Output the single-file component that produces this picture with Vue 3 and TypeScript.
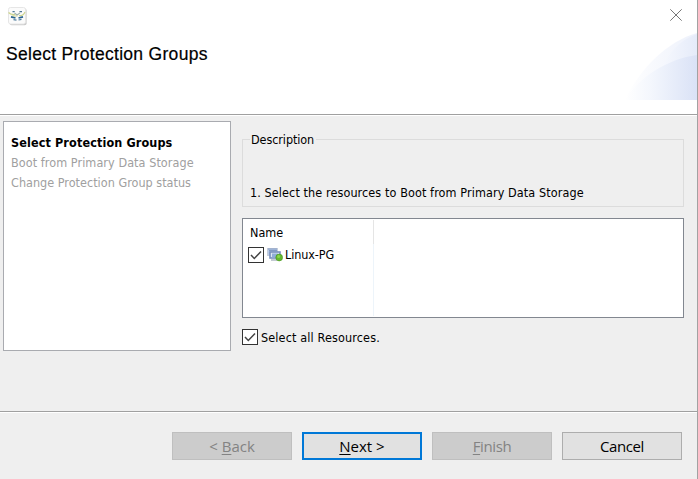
<script setup lang="ts">
import { ref } from 'vue'

interface Step { label: string; current: boolean }
interface WizardButton { before: string; key: string; after: string; kind: string; disabled: boolean }

const steps: Step[] = [
  { label: 'Select Protection Groups', current: true },
  { label: 'Boot from Primary Data Storage', current: false },
  { label: 'Change Protection Group status', current: false },
]
const buttons: WizardButton[] = [
  { before: '< ', key: 'B', after: 'ack', kind: 'back', disabled: true },
  { before: '', key: 'N', after: 'ext >', kind: 'next', disabled: false },
  { before: '', key: 'F', after: 'inish', kind: 'finish', disabled: true },
  { before: 'Cancel', key: '', after: '', kind: 'cancel', disabled: false },
]
const checked = ref(true)
const toggle = () => { checked.value = !checked.value }
</script>

<template>
  <main class="dialog">
    <header class="header">
      <svg class="logo" width="20" height="20" viewBox="0 0 20 20">
        <rect x="1.6" y="1.6" width="17" height="16.6" rx="2" fill="#c9c9c9" />
        <rect x="0.5" y="0.5" width="17" height="16.5" rx="2" fill="#fbfbfb" stroke="#e6e6e6" />
        <g fill="none" stroke-width="1.2">
          <path d="M.5 5.500Q3 8 7 7.500M11 8.500q4 1 6-3.500M3.500 9h6" stroke="#cdd48e" />
          <path d="M4.500 4.700h2.200M11.500 4.700h2.500" stroke="#4f7795" />
          <path d="M6.500 6l2.500 2 3-2" stroke="#9eb1ad" />
          <path d="M3 9.800l4.500 1.200M10.500 11l4.500-1.200" stroke="#2c6592" stroke-width="1.800" />
          <path d="M5.500 12.700l3 .5M10.500 13l3-.6" stroke="#5580a0" />
        </g>
      </svg>
      <h1 class="title">Select Protection Groups</h1>
      <svg class="close" width="12" height="12" viewBox="0 0 12 12">
        <path d="M.3.3 11.7 11.700M11.700.3.3 11.700" stroke="#777" fill="none" />
      </svg>
      <svg class="swoosh" width="72" height="67" viewBox="0 0 72 67">
        <defs>
          <linearGradient id="outer"><stop offset="0" stop-color="#fff" /><stop offset="1" stop-color="#edf1fb" /></linearGradient>
          <linearGradient id="inner"><stop offset="0" stop-color="#f7f9fe" /><stop offset="1" stop-color="#e5ebf9" /></linearGradient>
          <linearGradient id="lower"><stop offset="0" stop-color="#fff" /><stop offset=".35" stop-color="#f4f7fd" /><stop offset="1" stop-color="#dae2f6" /></linearGradient>
        </defs>
        <path d="M0 67C15 35 43 8 72 0V67Z" fill="url(#outer)" />
        <path d="M35 37C45 17 57 6 72 1V37Z" fill="url(#inner)" />
        <path d="M0 67C15 43 43 26 72 22V67Z" fill="url(#lower)" />
      </svg>
    </header>

    <section class="body">
      <nav class="steps">
        <div v-for="s in steps" :key="s.label" class="step" :class="{ current: s.current }"><span>{{ s.label }}</span></div>
      </nav>
      <div class="content">
        <div class="group">
          <div class="legend"><span class="legend-text">Description</span></div>
          <p class="hint">1. Select the resources to Boot from Primary Data Storage</p>
        </div>
        <div class="table">
          <div class="column">
            <div class="th">Name</div>
            <div class="row">
              <span class="check" @click="toggle">
                <svg v-if="checked" width="14" height="14" viewBox="0 0 14 14"><path d="M2 7l3.300 3.500L12 3.500" fill="none" stroke="#444" stroke-width="1.500" /></svg>
              </span>
              <svg class="vm" width="16" height="14" viewBox="0 0 16 14">
                <rect x="0.500" y="0.500" width="10" height="7" fill="#b9cce8" stroke="#c5cdda" />
                <path d="M1 1h9M2 2.500h8" stroke="#8299c4" />
                <rect x="3" y="4" width="10" height="6" fill="#dfe8f5" stroke="#788fbd" stroke-width="1.600" />
                <rect x="5" y="5.500" width="6" height="4" fill="#90add8" />
                <path d="M4 12h6" stroke="#a3adbc" stroke-width="1.300" />
                <circle cx="12.200" cy="9.500" r="3.400" fill="#64b82e" stroke="#46941f" stroke-width=".6" />
                <circle cx="11.600" cy="8.600" r="1.500" fill="#8bd74d" />
              </svg>
              <span class="resource">Linux-PG</span>
            </div>
          </div>
        </div>
        <div class="all">
          <span class="check" @click="toggle">
            <svg v-if="checked" width="14" height="14" viewBox="0 0 14 14"><path d="M2 7l3.300 3.500L12 3.500" fill="none" stroke="#444" stroke-width="1.500" /></svg>
          </span>
          <span class="all-text">Select all Resources.</span>
        </div>
      </div>
    </section>

    <footer class="footer">
      <button v-for="b in buttons" :key="b.kind" class="btn" :class="b.kind" :disabled="b.disabled"><span class="caption">{{ b.before }}<span v-if="b.key" class="key">{{ b.key }}</span>{{ b.after }}</span></button>
    </footer>
  </main>
</template>

<style>
body { margin: 0; overflow: hidden; }
</style>

<style scoped>
.dialog {
  box-sizing: border-box;
  width: 698px;
  height: 479px;
  display: flex;
  flex-direction: column;
  border-right: 1px solid #a2a2a2;
  background: #efefef;
  color: #000;
  font: 12.5px/20px "DejaVu Sans Condensed", "DejaVu Sans", sans-serif;
  font-stretch: condensed;
  letter-spacing: 0.1px;
  white-space: nowrap;
}
.header {
  box-sizing: border-box;
  position: relative;
  flex: 0 0 116px;
  padding: 7px 0 0 8px;
  background: #fff;
  box-shadow: inset 0 -1px #fff, inset 0 -2px #a0a0a0;
}
.logo { display: block; }
.title {
  margin: 16px 0 0 -2px;
  font: 400 17.5px/22px "Liberation Sans", Arial, sans-serif;
  letter-spacing: 0.3px;
  -webkit-text-stroke: 0.2px #000;
}
.close { position: absolute; right: 15px; top: 9px; }
.swoosh { position: absolute; right: 0; top: 33px; }
.body {
  box-sizing: border-box;
  flex: 0 0 295px;
  display: flex;
  gap: 11px;
  padding: 5px 13px 0 3px;
}
.steps {
  box-sizing: border-box;
  width: 228px;
  height: 230px;
  padding: 11px 7px;
  border: 1px solid #a9abb0;
  background: #fff;
}
.step { height: 20px; color: #a0a0a0; letter-spacing: 0.07px; }
.step:last-child { letter-spacing: 0.02px; }
.step.current { color: #000; font-weight: 700; letter-spacing: 0.12px; }
.content { flex: 1; padding-top: 18px; }
.group {
  box-sizing: border-box;
  height: 68px;
  padding-left: 7px;
  border: 1px solid #dcdcdc;
}
.legend { height: 53px; margin-top: -10px; }
.legend-text { display: inline-block; padding: 0 2px 0 1px; background: #efefef; letter-spacing: -0.08px; }
.hint { margin: 0; }
.table {
  box-sizing: border-box;
  height: 100px;
  margin-top: 11px;
  padding: 1px;
  border: 1px solid #828790;
  background: #fff;
}
.column {
  box-sizing: border-box;
  width: 130px;
  height: 96px;
  border-right: 1px solid #edf4fa;
}
.th { box-sizing: border-box; height: 24px; padding: 3px 0 0 6px; border-right: 1px solid #e5e5e5; margin-right: -1px; letter-spacing: 0; }
.row { display: flex; align-items: center; height: 22px; padding-left: 4px; }
.check {
  box-sizing: border-box;
  flex: none;
  width: 16px;
  height: 16px;
  border: 1px solid #333;
  background: #fff;
}
.check svg { display: block; }
.vm { margin: 0 2px 0 3px; }
.resource { letter-spacing: -0.1px; }
.all { display: flex; align-items: center; gap: 3px; height: 20px; margin-top: 9px; }
.all-text { padding-top: 2px; letter-spacing: 0.14px; }
.footer {
  flex: 1;
  display: flex;
  justify-content: flex-end;
  align-items: flex-start;
  gap: 10px;
  padding: 19px 15px 0 0;
  border-top: 1px solid #a0a0a0;
  box-shadow: inset 0 1px #fff;
}
.btn {
  box-sizing: border-box;
  width: 120px;
  height: 28px;
  margin-top: 1px;
  padding: 0;
  border: 1px solid #adadad;
  background: #e1e1e1;
  color: #000;
  font: 15px/24px "Open Sans", "Noto Sans", sans-serif;
}
.btn:disabled { background: #ccc; border-color: #bfbfbf; color: #838383; }
.btn.next { border: 2px solid #0078d7; }
.btn.finish, .btn.cancel { letter-spacing: -0.4px; }
.caption { display: inline-block; }
.key { text-decoration: underline; text-decoration-thickness: 1px; text-underline-offset: 2px; }
</style>
